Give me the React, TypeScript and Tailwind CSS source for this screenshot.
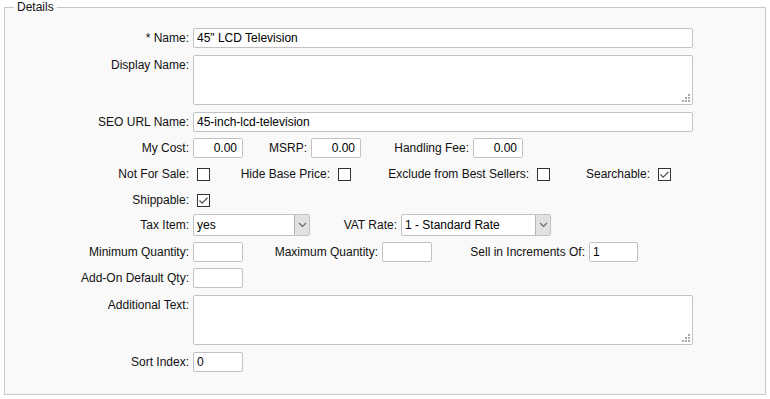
import React from 'react';

const inputCls = 'h-[20px] border border-[#c2c2c2] rounded-[2px] bg-white px-[3px] text-[12px] text-black outline-none';

const Label: React.FC<{ text: string }> = ({ text }) => (
    <div className="w-[184px] shrink-0 h-[20px] flex items-center justify-end whitespace-nowrap">{text}</div>
);

const InlineLabel: React.FC<{ text: string; className: string }> = ({ text, className }) => (
    <span className={`shrink-0 flex justify-end whitespace-nowrap ${className}`}>{text}</span>
);

const Checkbox: React.FC<{ checked?: boolean; className?: string }> = ({ checked, className }) => (
    <span className={`w-[13px] h-[13px] shrink-0 border border-[#333] bg-white flex items-center justify-center ${className ?? ''}`}>
        {checked && (
            <svg width="11" height="11" viewBox="0 0 11 11">
                <path d="M1.5 5.5 L4.2 8.2 L9.5 2.8" fill="none" stroke="#555" strokeWidth="1.3" />
            </svg>
        )}
    </span>
);

const Grip = () => (
    <svg className="absolute right-[2px] bottom-[2px]" width="8" height="8" viewBox="0 0 8 8">
        <rect x="6" y="0" width="2" height="2" fill="#aaa" />
        <rect x="3" y="3" width="2" height="2" fill="#aaa" />
        <rect x="6" y="3" width="2" height="2" fill="#aaa" />
        <rect x="0" y="6" width="2" height="2" fill="#aaa" />
        <rect x="3" y="6" width="2" height="2" fill="#aaa" />
        <rect x="6" y="6" width="2" height="2" fill="#aaa" />
    </svg>
);

const TextArea: React.FC = () => (
    <div className="relative ml-[4px] w-[500px] h-[50px] border border-[#c2c2c2] rounded-[2px] bg-white">
        <Grip />
    </div>
);

const Select: React.FC<{ value: string; className: string }> = ({ value, className }) => (
    <div className={`h-[22px] flex border border-[#c2c2c2] rounded-[2px] bg-white ${className}`}>
        <span className="flex-1 flex items-center pl-[3px] text-black">{value}</span>
        <span className="w-[15px] h-full bg-[#e1e1e1] border-l border-[#b5b5b5] flex items-center justify-center">
            <svg width="9" height="6" viewBox="0 0 9 6">
                <path d="M1 1 L4.5 4.5 L8 1" fill="none" stroke="#666" strokeWidth="1.1" />
            </svg>
        </span>
    </div>
);

export default function App() {
    return (
        <div className="bg-white w-[770px] h-[399px] font-['Liberation_Sans',Arial,sans-serif] text-[12px] leading-[14px] text-[#111]">
            <fieldset className="mx-[4px] h-[395px] border border-[#c8c8c8] bg-[#f9f9f9] pt-[14px]">
                <legend className="ml-[9px] px-[3px] text-[#111]">Details</legend>

                <div className="flex flex-col">
                    <div className="flex items-center h-[20px]">
                        <Label text="* Name:" />
                        <input className={`${inputCls} ml-[4px] w-[500px]`} defaultValue={'45" LCD Television'} />
                    </div>

                    <div className="flex items-start mt-[7px]">
                        <Label text="Display Name:" />
                        <TextArea />
                    </div>

                    <div className="flex items-center h-[20px] mt-[7px]">
                        <Label text="SEO URL Name:" />
                        <input className={`${inputCls} ml-[4px] w-[500px]`} defaultValue="45-inch-lcd-television" />
                    </div>

                    <div className="flex items-center h-[20px] mt-[6px]">
                        <Label text="My Cost:" />
                        <input className={`${inputCls} ml-[4px] w-[50px] text-right pr-[5px]`} defaultValue="0.00" />
                        <InlineLabel text="MSRP:" className="ml-[30px] w-[34px]" />
                        <input className={`${inputCls} ml-[4px] w-[50px] text-right pr-[5px]`} defaultValue="0.00" />
                        <InlineLabel text="Handling Fee:" className="ml-[34px] w-[74px]" />
                        <input className={`${inputCls} ml-[4px] w-[50px] text-right pr-[5px]`} defaultValue="0.00" />
                    </div>

                    <div className="flex items-center h-[20px] mt-[6px]">
                        <Label text="Not For Sale:" />
                        <Checkbox className="ml-[8px]" />
                        <InlineLabel text="Hide Base Price:" className="ml-[33px] w-[87px]" />
                        <Checkbox className="ml-[8px]" />
                        <InlineLabel text="Exclude from Best Sellers:" className="ml-[37px] w-[141px]" />
                        <Checkbox className="ml-[8px]" />
                        <InlineLabel text="Searchable:" className="ml-[37px] w-[63px]" />
                        <Checkbox checked className="ml-[8px]" />
                    </div>

                    <div className="flex items-center h-[20px] mt-[6px]">
                        <Label text="Shippable:" />
                        <Checkbox checked className="ml-[8px]" />
                    </div>

                    <div className="flex items-center h-[22px] mt-[4px]">
                        <Label text="Tax Item:" />
                        <Select value="yes" className="ml-[4px] w-[117px]" />
                        <InlineLabel text="VAT Rate:" className="ml-[30px] w-[57px]" />
                        <Select value="1 - Standard Rate" className="ml-[4px] w-[150px]" />
                    </div>

                    <div className="flex items-center h-[20px] mt-[6px]">
                        <Label text="Minimum Quantity:" />
                        <input className={`${inputCls} ml-[4px] w-[50px]`} defaultValue="" />
                        <InlineLabel text="Maximum Quantity:" className="ml-[30px] w-[105px]" />
                        <input className={`${inputCls} ml-[4px] w-[50px]`} defaultValue="" />
                        <InlineLabel text="Sell in Increments Of:" className="ml-[34px] w-[119px]" />
                        <input className={`${inputCls} ml-[4px] w-[49px]`} defaultValue="1" />
                    </div>

                    <div className="flex items-center h-[20px] mt-[6px]">
                        <Label text="Add-On Default Qty:" />
                        <input className={`${inputCls} ml-[4px] w-[50px]`} defaultValue="" />
                    </div>

                    <div className="flex items-start mt-[7px]">
                        <Label text="Additional Text:" />
                        <TextArea />
                    </div>

                    <div className="flex items-center h-[20px] mt-[7px]">
                        <Label text="Sort Index:" />
                        <input className={`${inputCls} ml-[4px] w-[50px]`} defaultValue="0" />
                    </div>
                </div>
            </fieldset>
        </div>
    );
}
